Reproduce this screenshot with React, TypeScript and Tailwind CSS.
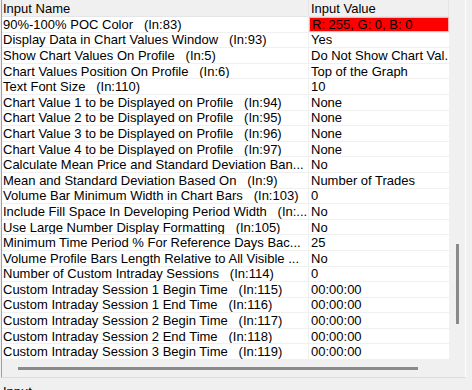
import React from "react";

const rows: [string, string][] = [
  ["90%-100% POC Color   (In:83)", "R: 255, G: 0, B: 0"],
  ["Display Data in Chart Values Window   (In:93)", "Yes"],
  ["Show Chart Values On Profile   (In:5)", "Do Not Show Chart Val."],
  ["Chart Values Position On Profile   (In:6)", "Top of the Graph"],
  ["Text Font Size   (In:110)", "10"],
  ["Chart Value 1 to be Displayed on Profile   (In:94)", "None"],
  ["Chart Value 2 to be Displayed on Profile   (In:95)", "None"],
  ["Chart Value 3 to be Displayed on Profile   (In:96)", "None"],
  ["Chart Value 4 to be Displayed on Profile   (In:97)", "None"],
  ["Calculate Mean Price and Standard Deviation Ban...", "No"],
  ["Mean and Standard Deviation Based On   (In:9)", "Number of Trades"],
  ["Volume Bar Minimum Width in Chart Bars   (In:103)", "0"],
  ["Include Fill Space In Developing Period Width   (In:...", "No"],
  ["Use Large Number Display Formatting   (In:105)", "No"],
  ["Minimum Time Period % For Reference Days Bac...", "25"],
  ["Volume Profile Bars Length Relative to All Visible ...", "No"],
  ["Number of Custom Intraday Sessions   (In:114)", "0"],
  ["Custom Intraday Session 1 Begin Time   (In:115)", "00:00:00"],
  ["Custom Intraday Session 1 End Time   (In:116)", "00:00:00"],
  ["Custom Intraday Session 2 Begin Time   (In:117)", "00:00:00"],
  ["Custom Intraday Session 2 End Time   (In:118)", "00:00:00"],
  ["Custom Intraday Session 3 Begin Time   (In:119)", "00:00:00"],
];

export default function App() {
  return (
    <div
      className="relative w-[472px] h-[390px] overflow-hidden bg-[#f0f0f0] text-black text-[13px] leading-[15px]"
      style={{ fontFamily: '"Liberation Sans", Arial, sans-serif' }}
    >
      <div className="ml-[1px] w-[465px] h-[378px] flex flex-col border-l border-[#a0a0a0] border-r border-r-[#fdfdfd] border-b border-b-[#dcdcdc]">
        <div className="flex h-[360px]">
          <div className="w-[447px] flex flex-col bg-white">
            <div className="flex h-[17px] bg-[#f0f0f0] border-b border-[#e5e5e5]">
              <div className="w-[307px] pl-[1px] flex items-center border-r border-[#e5e5e5] whitespace-pre">
                Input Name
              </div>
              <div className="flex-1 pl-[2px] flex items-center border-r border-[#e5e5e5]">
                Input Value
              </div>
            </div>
            {rows.map(([name, value], i) => (
              <div key={i} className="flex h-[15.6px] border-b border-[#f0f0f0]">
                <div className="w-[307px] pl-[1px] flex items-center border-r border-[#f0f0f0] whitespace-pre overflow-hidden">
                  {name}
                </div>
                {i === 0 ? (
                  <div className="flex-1 flex items-center bg-[#ff0000] pl-[2px] border border-[#ffb0b0] whitespace-pre overflow-hidden">
                    {value}
                  </div>
                ) : (
                  <div className="flex-1 pl-[2px] flex items-center whitespace-pre overflow-hidden">
                    {value}
                  </div>
                )}
              </div>
            ))}
          </div>
          <div className="flex-1 flex flex-col items-center bg-[#f0f0f0]">
            <div className="h-[244px]" />
            <div className="w-[3px] h-[80px] bg-[#8a8a8a]" />
          </div>
        </div>
        <div className="flex-1 flex items-center">
          <div className="ml-[16px] w-[400px] h-[3px] bg-[#8a8a8a]" />
        </div>
      </div>
      <div className="pl-[3px] pt-[6px]">Input</div>
    </div>
  );
}
